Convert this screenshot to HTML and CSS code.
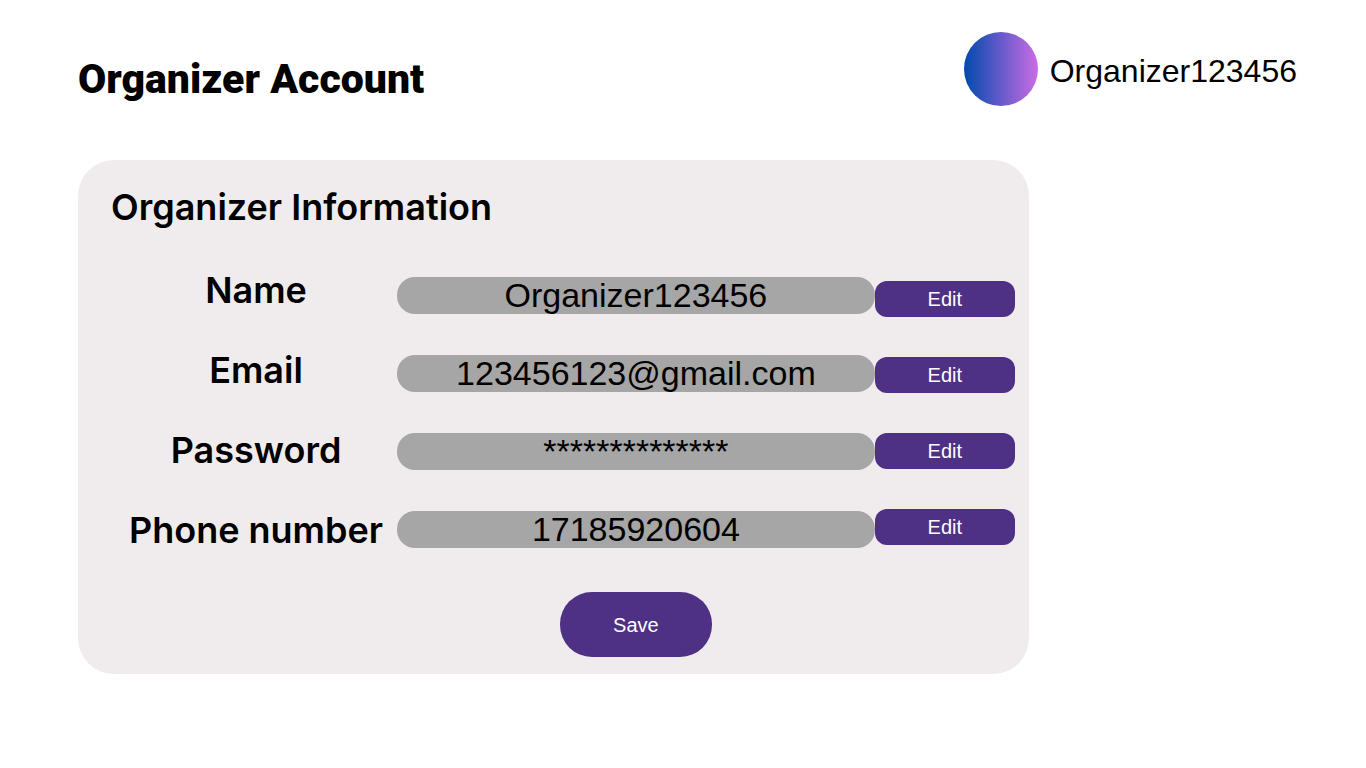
FILE: index.html
```html
<!DOCTYPE html>
<html lang="en">
<head>
<meta charset="utf-8">
<meta name="viewport" content="width=device-width, initial-scale=1">
<title>Organizer Account</title>
<link rel="stylesheet" href="styles.css">
</head>
<body>
<header class="header">
  <h1 class="title">Organizer Account</h1>
  <div class="user">
    <span class="avatar"></span>
    <span class="user-name">Organizer123456</span>
  </div>
</header>
<main>
  <form class="card">
    <h2 class="card-title">Organizer Information</h2>
    <div class="fields">
      <div class="labels">
        <label for="name">Name</label>
        <label for="email">Email</label>
        <label for="password">Password</label>
        <label for="phone">Phone number</label>
      </div>
      <div class="values">
        <input id="name" type="text" value="Organizer123456">
        <input id="email" type="email" value="123456123@gmail.com">
        <input id="password" type="text" value="**************">
        <input id="phone" type="tel" value="17185920604">
      </div>
      <div class="actions">
        <button type="button" class="edit" aria-label="Edit name">Edit</button>
        <button type="button" class="edit" aria-label="Edit email">Edit</button>
        <button type="button" class="edit" aria-label="Edit password">Edit</button>
        <button type="button" class="edit" aria-label="Edit phone number">Edit</button>
      </div>
      <button type="submit" class="save">Save</button>
    </div>
  </form>
</main>
</body>
</html>
```
FILE: styles.css
```css
* {
  box-sizing: border-box;
}

body {
  margin: 0;
  padding: 32px 69px 32px 78px;
  background: #fff;
  color: #000;
  font-family: "Liberation Sans", Arial, sans-serif;
}

.header {
  display: flex;
  justify-content: space-between;
  align-items: center;
  margin-bottom: 54px;
}

.title {
  margin: 0;
  padding-top: 20px;
  font-family: Roboto, sans-serif;
  font-size: 41px;
  font-weight: 900;
  line-height: 48px;
}

.user {
  display: flex;
  align-items: center;
  gap: 12px;
}

.avatar {
  width: 74px;
  height: 74px;
  border-radius: 50%;
  background: linear-gradient(90deg, #004aad, #cb6ce6);
}

.user-name {
  padding-top: 4px;
  font-size: 32px;
  line-height: 40px;
}

.card {
  width: 78%;
  min-width: 800px;
  padding: 27px 14px 17px 33px;
  border-radius: 36px;
  background: #f0ecee;
}

.card-title {
  margin: 0 0 43px;
  font-family: Inter, sans-serif;
  font-size: 36px;
  font-weight: 600;
  line-height: 40px;
}

.fields {
  display: grid;
  grid-template-columns: 286px 1fr 140px;
}

.labels,
.values,
.actions {
  display: flex;
  flex-direction: column;
}

.labels {
  align-items: center;
  gap: 40px;
  padding-left: 4px;
  font-family: Inter, sans-serif;
  font-size: 36px;
  font-weight: 600;
  line-height: 40px;
}

.values {
  gap: 41px;
  padding-top: 7px;
}

.values input {
  width: 100%;
  height: 37px;
  padding: 0 16px;
  border: 0;
  border-radius: 18px;
  background: #a6a6a6;
  color: #000;
  font: 34px/36px "Liberation Sans", Arial, sans-serif;
  text-align: center;
}

.actions {
  gap: 40px;
  padding-top: 11px;
}

.edit,
.save {
  border: 0;
  background: #4e3084;
  color: #fff;
  font: 20px/24px "Liberation Sans", Arial, sans-serif;
  cursor: pointer;
}

.edit {
  height: 36px;
  border-radius: 12px;
}

.save {
  grid-column: 2;
  justify-self: center;
  width: 152px;
  height: 65px;
  margin-top: 42px;
  border-radius: 32px;
}
```
